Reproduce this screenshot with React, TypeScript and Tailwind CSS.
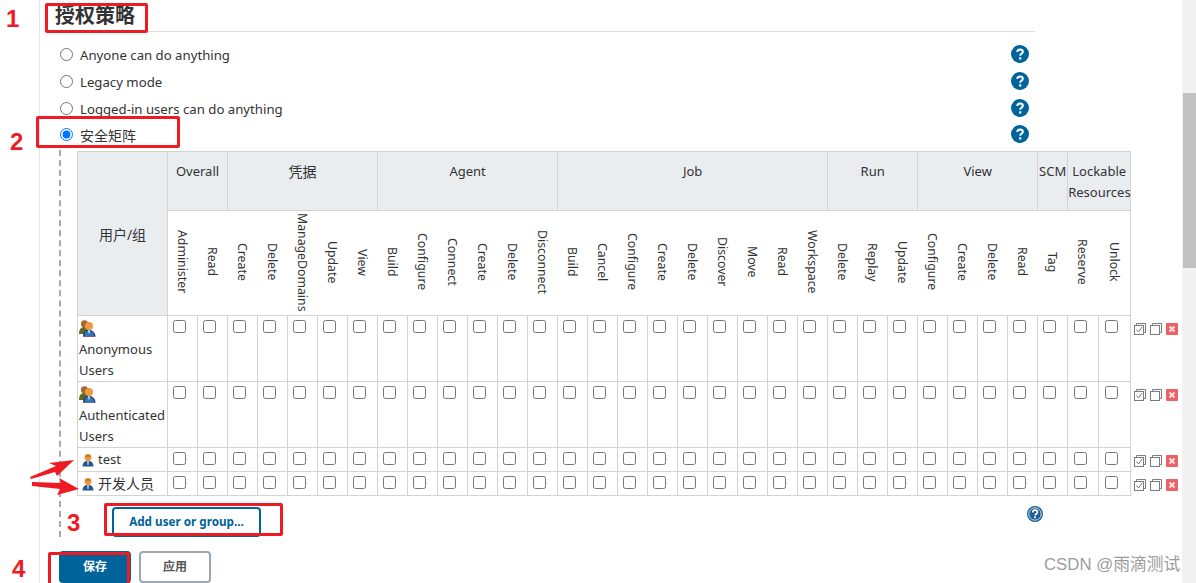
const groups = [
  { title: "Overall", cols: ["Administer", "Read"] },
  { title: "凭据", cols: ["Create", "Delete", "ManageDomains", "Update", "View"] },
  { title: "Agent", cols: ["Build", "Configure", "Connect", "Create", "Delete", "Disconnect"] },
  {
    title: "Job",
    cols: ["Build", "Cancel", "Configure", "Create", "Delete", "Discover", "Move", "Read", "Workspace"],
  },
  { title: "Run", cols: ["Delete", "Replay", "Update"] },
  { title: "View", cols: ["Configure", "Create", "Delete", "Read"] },
  { title: "SCM", cols: ["Tag"] },
  { title: "Lockable Resources", cols: ["Reserve", "Unlock"] },
];

const columns = groups.flatMap((g) => g.cols);

const rows = [
  { name: "Anonymous Users", group: true, height: "h-[66px]" },
  { name: "Authenticated Users", group: true, height: "h-[66px]" },
  { name: "test", group: false, height: "h-[24px]", nameClass: "text-[13px]" },
  { name: "开发人员", group: false, height: "h-[24px]", nameClass: "text-[14px]" },
];

const options = [
  { label: "Anyone can do anything", height: "h-[27px]", textClass: "text-[13.2px]" },
  { label: "Legacy mode", height: "h-[27px]", textClass: "text-[13.2px]" },
  { label: "Logged-in users can do anything", height: "h-[27px]", textClass: "text-[13.2px]" },
  { label: "安全矩阵", height: "h-[24px]", textClass: "text-[14px]", checked: true },
];

function HelpIcon() {
  return (
    <svg width="18" height="18" viewBox="0 0 18 18" className="mb-[3px] block">
      <circle cx="9" cy="9" r="9" fill="#00639a" />
      <path
        d="M6.300 7.100c0-1.700 1.200-2.700 2.800-2.700s2.700 1 2.700 2.300c0 2.100-2.600 2.100-2.600 4"
        fill="none"
        stroke="#fff"
        strokeWidth="2"
      />
      <rect x="8.100" y="12.300" width="2.200" height="2.200" fill="#fff" />
    </svg>
  );
}

function RingHelpIcon() {
  return (
    <svg width="16" height="16" viewBox="0 0 16 16" className="block">
      <circle cx="8" cy="8" r="8" fill="#1b5e98" />
      <circle cx="8" cy="8" r="6.200" fill="none" stroke="#fff" strokeWidth="0.8" />
      <path
        d="M5.700 6.400c0-1.400 1-2.200 2.400-2.200s2.300.8 2.300 2c0 1.700-2.200 1.800-2.200 3.300"
        fill="none"
        stroke="#fff"
        strokeWidth="1.700"
      />
      <rect x="7.200" y="10.400" width="1.800" height="1.800" fill="#fff" />
    </svg>
  );
}

function UserIcon() {
  return (
    <svg width="12" height="14" viewBox="0 0 12 14" className="shrink-0">
      <path d="M0.500 13.500c0-3.600 2-5.800 5.500-5.800s5.500 2.200 5.500 5.800z" fill="#23558f" />
      <path d="M5 8.200h2l-.5 3-.5 1-.5-1z" fill="#c9dcee" />
      <circle cx="6" cy="4.500" r="3.500" fill="#ee9a3c" />
      <path d="M2.700 3.600c.6-2.200 6-2.400 6.600 0-2.200.6-4.400.6-6.600 0z" fill="#c9742a" />
    </svg>
  );
}

function GroupIcon() {
  return (
    <svg width="17" height="17" viewBox="0 0 17 17" className="block">
      <path d="M0 14c0-4 1.500-7 5-7s4.500 3 4.500 7z" fill="#5b6a26" />
      <circle cx="5.500" cy="3.800" r="3.600" fill="#a2682f" />
      <path d="M4 16.800c0-4.300 1.800-7 5.500-7s7 2.700 7 7z" fill="#3c2f7c" />
      <path d="M5.500 16c0-3.300 1.300-5.200 4.200-5.200s5.300 1.900 5.300 5.200z" fill="#2a7bb4" />
      <circle cx="10" cy="6" r="4" fill="#f09a40" />
      <path d="M9 10.300h2l-.5 2.800-.5.800-.5-.8z" fill="#d6e6f2" />
    </svg>
  );
}

function RowActions() {
  return (
    <div className="flex items-center gap-[4px] pl-[3px] pt-[7px]">
      <svg width="12" height="12" viewBox="0 0 12 12" fill="none" stroke="#7b7b7b">
        <path d="M2.500 2.500V.500h9v9H9.500" />
        <rect x="0.500" y="2.500" width="9" height="9" fill="#fff" />
        <path d="M2.500 6.500l2 2.500 3.500-5" strokeWidth="1" />
      </svg>
      <svg width="12" height="12" viewBox="0 0 12 12" fill="none" stroke="#7b7b7b">
        <path d="M2.500 2.500V.500h9v9H9.500" />
        <rect x="0.500" y="2.500" width="9" height="9" fill="#fff" />
      </svg>
      <svg width="12" height="12" viewBox="0 0 12 12">
        <rect width="12" height="12" rx="1" fill="#ef6065" />
        <path d="M3.500 3.500l5 5m0-5l-5 5" stroke="#fde4e4" strokeWidth="2" />
      </svg>
    </div>
  );
}

function Arrows() {
  return (
    <svg
      width="90"
      height="50"
      viewBox="0 0 90 50"
      fill="#ed1c24"
      className="absolute left-[20px] top-[455px]"
    >
      <path d="M10 22l26-11-7-3 25-3-17 16-2-4-24 7z" />
      <path d="M12 27l29 1 -2-5 20 11-22 6 3-6-28-3z" />
    </svg>
  );
}

function Annotations() {
  return (
    <>
      <div className="absolute left-[45px] top-[3px] h-[30px] w-[103px] rounded-[2px] border-[3px] border-[#ed1c24]" />
      <div className="absolute left-[36px] top-[116px] h-[32px] w-[144px] rounded-[2px] border-[3px] border-[#ed1c24]" />
      <div className="absolute left-[104px] top-[503px] h-[33px] w-[179px] rounded-[2px] border-[3px] border-[#ed1c24]" />
      <div className="absolute left-[48px] top-[552px] h-[40px] w-[82px] rounded-[2px] border-[3px] border-[#ed1c24]" />
      <span className="absolute left-[6px] top-[1px] font-['Liberation_Sans',sans-serif] text-[24px] font-bold text-[#ed1c24]">
        1
      </span>
      <span className="absolute left-[10px] top-[124px] font-['Liberation_Sans',sans-serif] text-[24px] font-bold text-[#ed1c24]">
        2
      </span>
      <span className="absolute left-[67px] top-[505px] font-['Liberation_Sans',sans-serif] text-[24px] font-bold text-[#ed1c24]">
        3
      </span>
      <span className="absolute left-[12px] top-[551px] font-['Liberation_Sans',sans-serif] text-[24px] font-bold text-[#ed1c24]">
        4
      </span>
      <Arrows />
      <span className="absolute left-[1044px] top-[554px] font-['Liberation_Sans','Noto_Sans_CJK_SC',sans-serif] text-[16.800px] leading-[22px] text-[#9c9c9c]">
        CSDN @雨滴测试
      </span>
    </>
  );
}

function MatrixTable() {
  return (
    <table className="w-[1103px] table-fixed border-collapse text-[13px] leading-[21px] text-[#333]">
      <colgroup>
        <col className="w-[90px]" />
        {columns.map((c, i) => (
          <col key={i} className={i === 30 ? "w-[31px]" : i === 31 ? "w-[32px]" : "w-[30px]"} />
        ))}
        <col className="w-[50px]" />
      </colgroup>
      <thead>
        <tr>
          <th
            rowSpan={2}
            className="border border-[#d3d4d0] bg-[#e9edf0] pt-[1px] text-center align-middle text-[14px] font-normal"
          >
            用户/组
          </th>
          {groups.map((g) => (
            <th
              key={g.title}
              colSpan={g.cols.length}
              className={`h-[59px] border border-[#d3d4d0] bg-[#e9edf0] p-0 pt-[9px] text-center align-top font-normal ${
                g.title === "凭据" ? "text-[14px]" : ""
              }`}
            >
              {g.title}
            </th>
          ))}
        </tr>
        <tr>
          {columns.map((c, i) => (
            <th
              key={i}
              className={`h-[105px] border-y border-[#d3d4d0] p-0 pb-[2px] text-center align-middle font-normal ${
                i === 31 ? "border-r" : ""
              }`}
            >
              <span
                className={`block w-[16px] text-left text-[12.300px] leading-[16px] [writing-mode:vertical-rl] ${
                  i === 31 ? "ml-[7px]" : "ml-[6px]"
                }`}
              >
                {c}
              </span>
            </th>
          ))}
        </tr>
      </thead>
      <tbody>
        {rows.map((r) => (
          <tr key={r.name} className={r.height}>
            <td className={`overflow-visible border border-[#d3d4d0] pl-[1px] align-top ${r.group ? "pt-[4px]" : ""}`}>
              {r.group ? (
                <>
                  <GroupIcon />
                  <div className="mt-[2px] whitespace-pre-line">{r.name.replace(" ", "\n")}</div>
                </>
              ) : (
                <div className="flex h-[23px] items-center gap-[4px] pl-[3px]">
                  <UserIcon />
                  <span className={r.nameClass}>{r.name}</span>
                </div>
              )}
            </td>
            {columns.map((c, i) => (
              <td
                key={i}
                className={`border border-[#d3d4d0] pr-0 pt-[4px] align-top ${i >= 30 ? "pl-[6px]" : "pl-[5px]"}`}
              >
                <input type="checkbox" className="block" />
              </td>
            ))}
            <td className="p-0 align-top">
              <RowActions />
            </td>
          </tr>
        ))}
      </tbody>
    </table>
  );
}

export default function App() {
  return (
    <div className="relative flex h-[583px] w-full overflow-hidden bg-white font-['Noto_Sans','Noto_Sans_CJK_SC',sans-serif] text-[13px] text-[#333]">
      <div className="w-[40px] shrink-0 border-r border-[#e6e6e6]" />
      <main className="flex min-w-0 flex-1 flex-col pl-[5px]">
        <h2 className="h-[32px] w-[990px] border-b border-[#e0e0e0] pl-[10px] text-[20px] font-bold leading-[32px] text-[#333]">
          授权策略
        </h2>
        <div className="mt-[10px] flex flex-col">
          {options.map((o) => (
            <label key={o.label} className={`flex w-[984px] items-center pl-[15px] ${o.height}`}>
              <input type="radio" name="strategy" defaultChecked={o.checked} className="mb-[2px]" />
              <span className={`ml-[7px] ${o.textClass}`}>{o.label}</span>
              <span className="ml-auto">
                <HelpIcon />
              </span>
            </label>
          ))}
        </div>
        <div className="ml-[14px] mt-[3px] h-[387px] w-[1121px] border-l-2 border-dashed border-[#a9a9a9] pl-[16px] pt-[1px]">
          <MatrixTable />
          <div className="mt-[10px] flex w-[966px] items-start">
            <button className="ml-[35px] mt-[1px] h-[30px] w-[149px] rounded-[4px] border-2 border-[#00639a] bg-white text-[11.700px] font-bold text-[#00639a]">
              Add user or group...
            </button>
            <span className="ml-auto">
              <RingHelpIcon />
            </span>
          </div>
        </div>
        <div className="ml-[14px] mt-[14px] flex gap-[8px]">
          <button className="h-[32px] w-[72px] rounded-[4px] bg-[#00639a] text-[12px] font-bold text-white">
            保存
          </button>
          <button className="h-[32px] w-[72px] rounded-[4px] border-2 border-[#9aa9b5] bg-white text-[12px] font-bold text-[#555]">
            应用
          </button>
        </div>
      </main>
      <div className="w-[14px] shrink-0 bg-[#f1f1f1] pl-[1px] pt-[93px]">
        <div className="h-[175px] bg-[#c1c1c1]" />
      </div>
      <Annotations />
    </div>
  );
}
